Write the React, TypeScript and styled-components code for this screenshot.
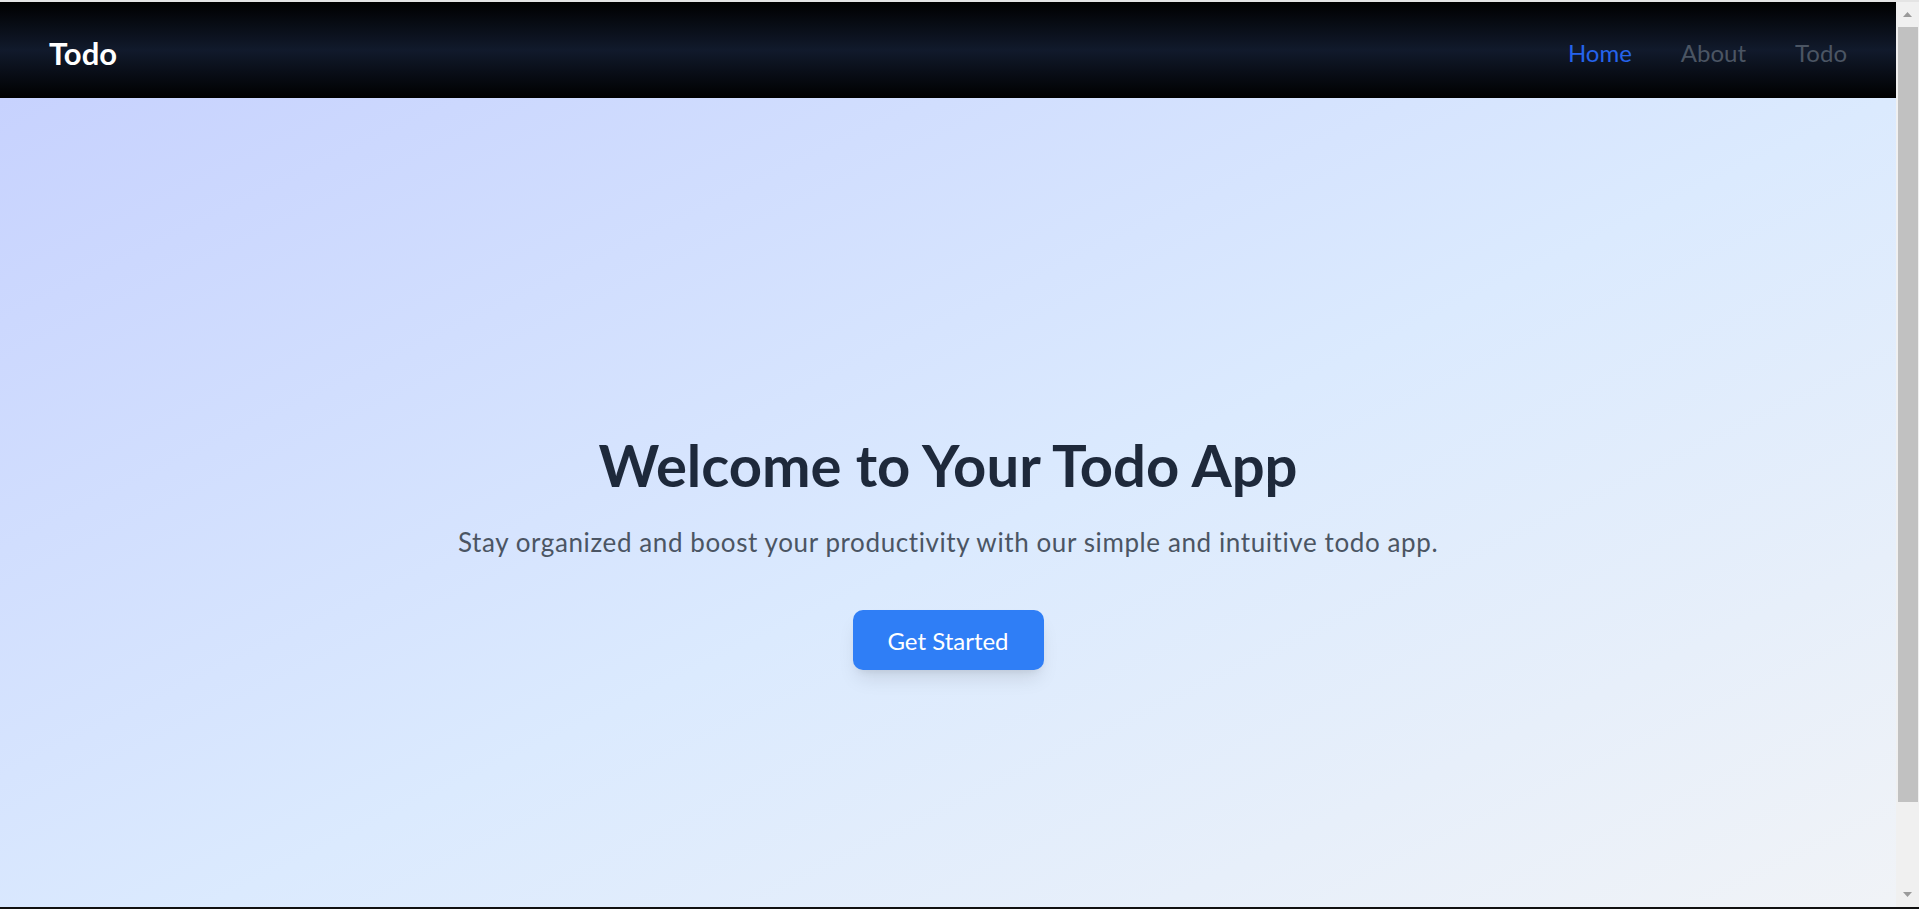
import React from "react";
import styled, { createGlobalStyle } from "styled-components";

const GlobalStyle = createGlobalStyle`
  html, body, #root {
    margin: 0;
    height: 100%;
  }
  html, body {
    overflow: hidden;
  }
  body {
    box-sizing: border-box;
    border-top: 2px solid #e4e4e4;
    border-bottom: 2px solid #111111;
    font-family: Lato, "Open Sans", sans-serif;
    background: #f0f0f0;
  }
  *, *::before, *::after {
    box-sizing: border-box;
  }
`;

const Frame = styled.div`
  height: 100%;
  display: flex;
`;

const Page = styled.div`
  flex: 1;
  min-width: 0;
  overflow: hidden;
`;

const ScrollBar = styled.div`
  width: 23px;
  flex-shrink: 0;
  display: flex;
  flex-direction: column;
  background: #f0f0f0;
`;

const ScrollButton = styled.div`
  height: 25px;
  display: flex;
  align-items: center;
  justify-content: center;
  color: #9a9a9a;
`;

const ScrollTrack = styled.div`
  flex: 1;
  display: flex;
  flex-direction: column;
`;

const ScrollThumb = styled.div`
  height: 775px;
  margin: 0 1px 0 2px;
  background: #c1c1c1;
`;

const NavBar = styled.nav`
  height: 96px;
  padding: 5px 49px 0 49px;
  display: flex;
  align-items: center;
  justify-content: space-between;
  background: linear-gradient(to bottom, #000000 0%, #111a2c 50%, #000000 100%);
`;

const Logo = styled.a`
  font-size: 31px;
  font-weight: 700;
  color: #ffffff;
  text-decoration: none;
`;

const NavLinks = styled.div`
  display: flex;
  align-items: center;
  gap: 49px;
`;

const NavLink = styled.a<{ $active?: boolean }>`
  font-size: 24px;
  font-weight: 400;
  color: ${(p) => (p.$active ? "#2563eb" : "#4b5563")};
  text-decoration: none;
`;

const Hero = styled.main`
  min-height: 909px;
  display: flex;
  flex-direction: column;
  align-items: center;
  justify-content: center;
  text-align: center;
  background: linear-gradient(to bottom right, #c7d2fe 0%, #dbeafe 50%, #f3f4f6 100%);
`;

const Title = styled.h1`
  margin: 0 0 30px;
  font-size: 58px;
  line-height: 60px;
  font-weight: 700;
  color: #1e293b;
`;

const Subtitle = styled.p`
  margin: 0 0 50px;
  font-size: 26px;
  line-height: 35px;
  letter-spacing: 0.6px;
  color: #4b5563;
`;

const CTAButton = styled.button`
  width: 191px;
  height: 60px;
  border: none;
  border-radius: 10px;
  background: #2f7ef6;
  color: #ffffff;
  font-family: inherit;
  font-size: 24px;
  cursor: pointer;
  box-shadow: 0 12px 19px -4px rgba(0, 0, 0, 0.1), 0 5px 8px -5px rgba(0, 0, 0, 0.1);
`;

const Arrow = ({ down }: { down?: boolean }) => (
  <svg width="9" height="5" viewBox="0 0 9 5" aria-hidden="true">
    <path d={down ? "M0 0 H9 L4.5 5 Z" : "M0 5 H9 L4.5 0 Z"} fill="currentColor" />
  </svg>
);

export default function App() {
  return (
    <>
      <GlobalStyle />
      <Frame>
        <Page>
          <NavBar>
            <Logo href="#">Todo</Logo>
            <NavLinks>
              <NavLink href="#" $active>
                Home
              </NavLink>
              <NavLink href="#">About</NavLink>
              <NavLink href="#">Todo</NavLink>
            </NavLinks>
          </NavBar>
          <Hero>
            <Title>Welcome to Your Todo App</Title>
            <Subtitle>
              Stay organized and boost your productivity with our simple and intuitive todo app.
            </Subtitle>
            <CTAButton>Get Started</CTAButton>
          </Hero>
        </Page>
        <ScrollBar aria-hidden="true">
          <ScrollButton>
            <Arrow />
          </ScrollButton>
          <ScrollTrack>
            <ScrollThumb />
          </ScrollTrack>
          <ScrollButton>
            <Arrow down />
          </ScrollButton>
        </ScrollBar>
      </Frame>
    </>
  );
}
